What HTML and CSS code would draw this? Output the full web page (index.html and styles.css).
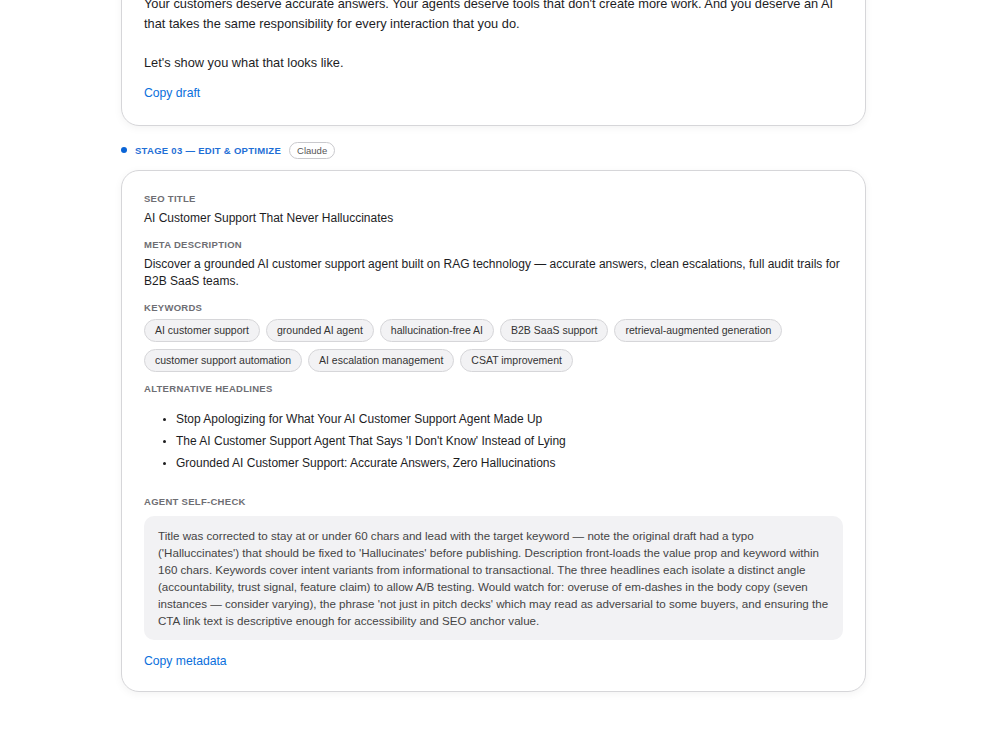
FILE: index.html
```html
<!DOCTYPE html>
<html lang="en">
<head>
    <meta charset="UTF-8">
    <meta name="viewport" content="width=device-width, initial-scale=1.0">
    <title>Content Pipeline</title>
    <link rel="stylesheet" href="styles.css">
</head>
<body>
    <main class="pipeline">
        <section class="card card-draft">
            <p>Your customers deserve accurate answers. Your agents deserve tools that don't create more work. And you deserve an AI that takes the same responsibility for every interaction that you do.</p>
            <p>Let's show you what that looks like.</p>
            <a class="copy-link" href="#">Copy draft</a>
        </section>

        <div class="stage">
            <span class="stage-dot"></span>
            <span class="stage-name">Stage 03 — Edit &amp; Optimize</span>
            <span class="model-badge">Claude</span>
        </div>

        <section class="card">
            <div class="field-label">SEO title</div>
            <div class="field-value">AI Customer Support That Never Halluccinates</div>

            <div class="field-label">Meta description</div>
            <div class="field-value">Discover a grounded AI customer support agent built on RAG technology — accurate answers, clean escalations, full audit trails for B2B SaaS teams.</div>

            <div class="field-label">Keywords</div>
            <div class="keywords">
                <span class="chip">AI customer support</span>
                <span class="chip">grounded AI agent</span>
                <span class="chip">hallucination-free AI</span>
                <span class="chip">B2B SaaS support</span>
                <span class="chip">retrieval-augmented generation</span>
                <span class="chip">customer support automation</span>
                <span class="chip">AI escalation management</span>
                <span class="chip">CSAT improvement</span>
            </div>

            <div class="field-label">Alternative headlines</div>
            <ul class="headlines">
                <li>Stop Apologizing for What Your AI Customer Support Agent Made Up</li>
                <li>The AI Customer Support Agent That Says 'I Don't Know' Instead of Lying</li>
                <li>Grounded AI Customer Support: Accurate Answers, Zero Hallucinations</li>
            </ul>

            <div class="field-label label-check">Agent self-check</div>
            <div class="self-check">Title was corrected to stay at or under 60 chars and lead with the target keyword — note the original draft had a typo ('Halluccinates') that should be fixed to 'Hallucinates' before publishing. Description front-loads the value prop and keyword within 160 chars. Keywords cover intent variants from informational to transactional. The three headlines each isolate a distinct angle (accountability, trust signal, feature claim) to allow A/B testing. Would watch for: overuse of em-dashes in the body copy (seven instances — consider varying), the phrase 'not just in pitch decks' which may read as adversarial to some buyers, and ensuring the CTA link text is descriptive enough for accessibility and SEO anchor value.</div>

            <a class="copy-link" href="#">Copy metadata</a>
        </section>
    </main>
</body>
</html>
```

FILE: styles.css
```css
* {
    box-sizing: border-box;
    margin: 0;
    padding: 0;
}

body {
    font-family: "Liberation Sans", Arial, sans-serif;
    background-color: #ffffff;
    color: #1d1d1f;
    padding-right: 13px;
}

.pipeline {
    width: 745px;
    margin: 0 auto;
    padding-bottom: 60px;
}

.card {
    background-color: #ffffff;
    border: 1px solid #d6d6d9;
    border-radius: 18px;
    padding: 22px 22px 21px;
    box-shadow: 0 2px 8px rgba(0, 0, 0, 0.05);
}

.card-draft {
    margin-top: -29px;
    font-size: 12.8px;
    line-height: 19.5px;
    padding-bottom: 23px;
}

.card-draft p + p {
    margin-top: 20px;
}

.copy-link {
    display: block;
    margin-top: 12px;
    font-size: 12.2px;
    line-height: 17px;
    color: #0a6fdc;
    text-decoration: none;
}

/* stage header */
.stage {
    display: flex;
    align-items: center;
    gap: 8px;
    margin: 16px 0 11px;
    height: 17px;
}

.stage-dot {
    width: 6px;
    height: 6px;
    border-radius: 50%;
    background-color: #0a64d6;
}

.stage-name {
    font-size: 9.5px;
    font-weight: 700;
    letter-spacing: 0.03em;
    text-transform: uppercase;
    color: #1f6fd6;
}

.model-badge {
    font-size: 9.5px;
    color: #555;
    border: 1px solid #c9c9cd;
    border-radius: 9px;
    padding: 0 7px;
    line-height: 15px;
}

/* fields */
.field-label {
    font-size: 9.5px;
    line-height: 12px;
    font-weight: 700;
    letter-spacing: 0.03em;
    text-transform: uppercase;
    color: #6e6e73;
    margin-bottom: 5px;
}

.field-value {
    font-size: 12px;
    line-height: 17px;
    margin-bottom: 12px;
}

.keywords {
    display: flex;
    flex-wrap: wrap;
    gap: 7px 6px;
    margin-top: 1px;
    margin-bottom: 11px;
}

.chip {
    font-size: 10.5px;
    line-height: 21px;
    padding: 0 10px;
    color: #333;
    background-color: #f2f2f4;
    border: 1px solid #d6d6d9;
    border-radius: 12px;
}

.headlines {
    font-size: 12px;
    line-height: 22px;
    padding-left: 32px;
    margin-top: 13px;
    margin-bottom: 22px;
}

.headlines li::marker {
    font-size: 10px;
}

.label-check {
    margin-bottom: 8px;
}

.self-check {
    background-color: #f2f2f4;
    border-radius: 10px;
    padding: 11px 14px;
    font-size: 11.6px;
    line-height: 17px;
    color: #444;
}

.self-check + .copy-link {
    margin-top: 13px;
}
```
